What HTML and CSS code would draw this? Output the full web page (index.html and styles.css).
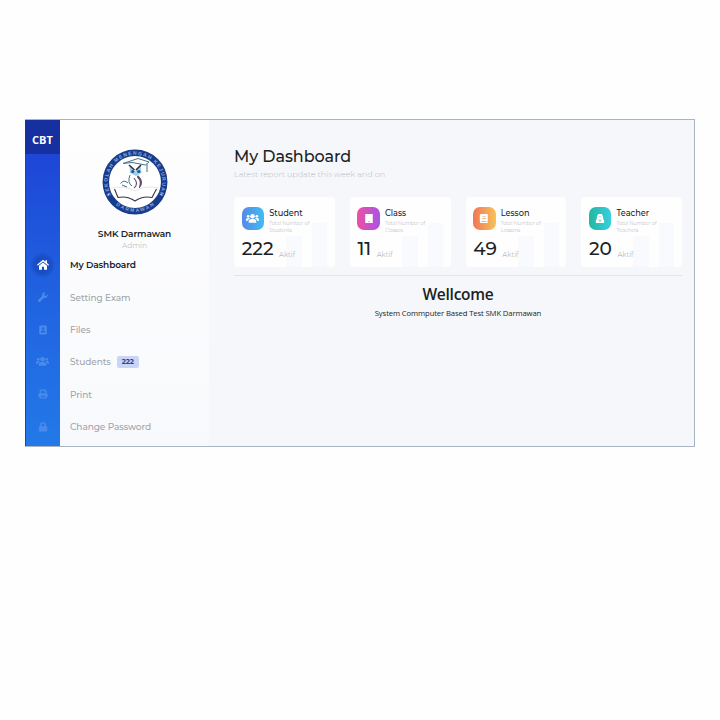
FILE: index.html
```html
<!DOCTYPE html>
<html lang="en">
<head>
<meta charset="utf-8">
<title>My Dashboard</title>
<link rel="stylesheet" href="styles.css">
</head>
<body>
<svg class="defs" width="0" height="0">
  <symbol id="users" viewBox="0 0 24 20"><circle cx="12" cy="6" r="4.2"/><circle cx="4" cy="6" r="2.5"/><circle cx="20" cy="6" r="2.5"/><path d="M5 18v-2q0-5 5-5h4q5 0 5 5v2zM0 14v-2q0-3 3-3h3q1 0 1.600.6Q4 11.500 3.700 14zM24 14v-2q0-3-3-3h-3q-1 0-1.600.6Q20 11.500 20.300 14z"/></symbol>
</svg>
<div class="app">
  <nav class="rail">
    <div class="brand">CBT</div>
    <div class="rail-list">
      <span class="rail-item active"><svg class="home" viewBox="0 0 24 21"><path d="M12 1 0 11l1.500 2L12 4.500 22.500 13l1.500-2-4-3.400V2h-3v3.200z"/><path d="M12 6.500 4 13v8h6v-6h4v6h6v-8z"/></svg></span>
      <span class="rail-item"><svg viewBox="0 0 24 24"><path d="M23.400 5.500 19.500 9.300 15.500 8.500 14.700 4.500 18.500.6A7 7 0 0 0 10 9.300L1 18.300a3.300 3.300 0 0 0 4.700 4.700l9-9A7 7 0 0 0 23.400 5.500z"/></svg></span>
      <span class="rail-item"><svg viewBox="0 0 24 24"><path fill-rule="evenodd" d="M5 1h14q2 0 2 2v18q0 2-2 2H5q-2 0-2-2V3q0-2 2-2zm7 4.500a3 3 0 1 0 0 6 3 3 0 0 0 0-6zM7 18h10v-1.500q0-3.500-3-3.500h-4q-3 0-3 3.500z"/></svg></span>
      <span class="rail-item"><svg class="wide"><use href="#users"/></svg></span>
      <span class="rail-item"><svg viewBox="0 0 24 24"><path fill-rule="evenodd" d="M4 10V2q0-1 1-1h12l3 3v6q3 0 3 3v6h-3v3q0 1-1 1H5q-1 0-1-1v-3H1v-6q0-3 3-3zm3-6v6h10V6h-3V4zm0 12v4h10v-4z"/></svg></span>
      <span class="rail-item"><svg viewBox="0 0 24 24"><path fill-rule="evenodd" d="M5 10V7a7 7 0 0 1 14 0v3h1q2 0 2 2v9q0 2-2 2H4q-2 0-2-2v-9q0-2 2-2zm3.500 0h7V7a3.500 3.500 0 0 0-7 0z"/></svg></span>
    </div>
  </nav>
  <aside class="side">
    <div class="profile">
      <svg class="crest" viewBox="0 0 66 66">
        <defs>
          <path id="arc-top" d="M9.500 47A27.300 27.300 0 1 1 56.500 47"/>
          <path id="arc-low" d="M12 54.500A30.500 30.500 0 0 0 54 54.500"/>
        </defs>
        <circle cx="33" cy="33" r="29.200" class="ring"/>
        <text class="ring-text"><textPath href="#arc-top" startOffset="1" textLength="112">SEKOLAH MENENGAH KEJURUAN</textPath></text>
        <text class="ring-text"><textPath href="#arc-low" startOffset="2.500" textLength="41">DARMAWAN</textPath></text>
        <circle cx="6.500" cy="45.500" r=".8" class="dot"/><circle cx="59.500" cy="45.500" r=".8" class="dot"/>
        <path class="pale" d="M9 39Q23 36 33 42 43 36 57 39"/>
        <path class="book" d="M12.500 40 16 48.500Q25 46.500 33 52 41 46.500 50 48.500L54.500 40"/>
        <path class="cap" d="M21 14.500 36 9.500 47 13 43.500 16 30 13.500 21 14.500M45 15v8"/>
        <path class="face" d="M27.500 17 33 22 38.500 16.500 39.500 24 34 27 28 24z"/>
        <path class="brow" d="M27 16 32.500 21M39 16 34 21"/>
        <circle cx="30.700" cy="22.500" r="1.600" class="eye"/><circle cx="36.800" cy="22.500" r="1.600" class="eye"/>
        <path class="cap" d="M28 26Q25 34 30 37M18.500 34.500Q22 30 26 34M20 36l5 2"/>
        <path class="wing" d="M36 27Q42 33 37.500 38.500 40 32 35.500 28zM32 29Q37 35 32 39"/>
      </svg>
      <div class="name">SMK Darmawan</div>
      <div class="role">Admin</div>
    </div>
    <div class="menu">
      <a class="current">My Dashboard</a>
      <a>Setting Exam</a>
      <a>Files</a>
      <a>Students<b class="badge">222</b></a>
      <a>Print</a>
      <a>Change Password</a>
    </div>
  </aside>
  <main class="main">
    <h1>My Dashboard</h1>
    <p class="lead">Latest report update this week and on</p>
    <section class="cards">
      <article class="card">
        <div class="head"><span class="tile blue"><svg class="wide"><use href="#users"/></svg></span><div><h2>Student</h2><p>Total Number of<br>Students</p></div></div>
        <div class="count"><strong>222</strong><span>Aktif</span></div>
      </article>
      <article class="card">
        <div class="head"><span class="tile pink"><svg viewBox="0 0 24 24"><path fill-rule="evenodd" d="M3 1h18v22H3zm8 17v3h2v-3z"/></svg></span><div><h2>Class</h2><p>Total Number of<br>Classes</p></div></div>
        <div class="count"><strong>11</strong><span>Aktif</span></div>
      </article>
      <article class="card">
        <div class="head"><span class="tile orange"><svg viewBox="0 0 24 24"><path fill-rule="evenodd" d="M5 1h16v17l-1 2 1 1v2H5q-3 0-3-3V4q0-3 3-3zm3 6v1.500h9V7zm0 4v1.500h9V11zM6 18v2h12v-2z"/></svg></span><div><h2>Lesson</h2><p>Total Number of<br>Lessons</p></div></div>
        <div class="count"><strong>49</strong><span>Aktif</span></div>
      </article>
      <article class="card">
        <div class="head"><span class="tile teal"><svg viewBox="0 0 24 24"><path fill-rule="evenodd" d="M8 1h8l3 5 1 8 2 3v6H2v-6l2-3 1-8zm1 13 1 6h1v-5zm6 0-2 1v5h1zM9 7v2h2V7zm4 0v2h2V7z"/></svg></span><div><h2>Teacher</h2><p>Total Number of<br>Teachers</p></div></div>
        <div class="count"><strong>20</strong><span>Aktif</span></div>
      </article>
    </section>
    <section class="welcome">
      <h3>Wellcome</h3>
      <p>System Commputer Based Test SMK Darmawan</p>
    </section>
  </main>
</div>
</body>
</html>
```
FILE: styles.css
```css
* { box-sizing: border-box; margin: 0; padding: 0; }
body { width: 720px; height: 720px; padding: 119px 0 0 25px; background: #fefefe; font-family: Montserrat, Inter, sans-serif; color: #1c1f26; overflow: hidden; }
svg { display: block; fill: currentColor; }
.defs { position: absolute; }
.app { display: flex; width: 670px; height: 328px; border: 1px solid #a9b3c3; background: #f5f7fb; }

.rail { width: 35px; margin-left: -1px; border-left: 1px solid #1c46a8; background: linear-gradient(#1d3fd4, #2060e0 50%, #2379e8); }
.brand { height: 34px; margin-left: -1px; text-align: center; color: #fff; background: #17309f; font: 700 11px/39px "Open Sans", sans-serif; }
.rail-list { padding-top: 94.600px; margin-left: -1px; }
.rail-item { display: flex; align-items: center; justify-content: center; height: 32.400px; color: #4b8aeb; }
.rail-item svg { width: 10px; height: 10px; }
.rail-item svg.wide { width: 13px; height: 11px; }
.rail-item svg.home { width: 12px; height: 11px; }
.rail-item.active { color: #fff; background: radial-gradient(circle, #194dc3 0 8px, transparent 13px); }

.side { width: 149px; background: linear-gradient(#fefeff, #fafbfd 65%, #f8f9fc); }
.profile { height: 128.600px; padding-top: 29px; text-align: center; }
.crest { width: 66px; height: 66px; margin: 0 auto; }
.ring { fill: #fff; stroke: #173c8c; stroke-width: 6.500; }
.ring-text { fill: #8fa9dc; font: 700 5px "Liberation Sans", sans-serif; }
.dot { fill: #b9cdf0; }
.crest path { fill: none; stroke-linejoin: round; }
.crest .pale { stroke: #d2d4dd; stroke-width: .6; }
.crest .book { stroke: #373447; stroke-width: 1.100; }
.crest .cap { stroke: #487086; stroke-width: 1; }
.crest .face { fill: #9bcfec; }
.crest .brow { stroke: #343141; stroke-width: 1.600; }
.crest .eye { fill: #27567c; }
.crest .wing { stroke: #5b4868; stroke-width: 1.100; }
.name { margin-top: 12px; font-size: 9px; line-height: 13px; font-weight: 600; letter-spacing: -.1px; }
.role { font-size: 7.500px; line-height: 11px; color: #c2c4c8; letter-spacing: -.1px; }
.menu a { display: flex; align-items: center; height: 32.400px; padding-left: 10px; font-size: 9px; font-weight: 500; letter-spacing: -.08px; color: #a3a5a9; }
.menu a.current { color: #20232a; font-weight: 600; letter-spacing: -.12px; }
.badge { width: 22px; height: 12px; margin-left: 6px; border-radius: 2px; background: #c9d5f6; color: #28439b; font-size: 7px; line-height: 12px; font-weight: 700; text-align: center; }

.main { flex: 1; padding: 26px 12px 0 25px; }
h1 { font-size: 16px; line-height: 21px; font-weight: 500; letter-spacing: -.08px; }
.lead { font-size: 8px; line-height: 14px; color: #b8bbc1; font-weight: 300; }
.cards { display: grid; grid-template-columns: repeat(4, 1fr); gap: 15px; margin-top: 16px; padding-bottom: 8px; border-bottom: 1px solid #e2e5eb; }
.card { height: 70px; padding: 10px 0 0 7.700px; border-radius: 4px; background: linear-gradient(#f9fafd, #f9fafd) 52px 100% / 16px 31px no-repeat, linear-gradient(#f9fafd, #f9fafd) 78px 100% / 15px 44px no-repeat, #fefefe; }
.head { display: flex; gap: 5px; height: 29px; }
.tile { display: flex; align-items: center; justify-content: center; width: 22.500px; height: 23px; border-radius: 7px; color: #fff; }
.tile svg { width: 10px; height: 11px; }
.tile svg.wide { width: 13px; height: 11px; }
.blue { background: linear-gradient(90deg, #5689e9, #41bdf2); }
.pink { background: linear-gradient(90deg, #ed4fa2, #a855e5); }
.orange { background: linear-gradient(90deg, #f37557, #f5c35b); }
.teal { background: linear-gradient(90deg, #25b6a0, #38cfe0); }
h2 { font-size: 8.200px; line-height: 12px; font-weight: 500; }
.head p { margin-top: 1px; font-size: 5px; line-height: 7px; font-weight: 300; color: #a9abb1; white-space: nowrap; }
.count { display: flex; align-items: baseline; gap: 5.500px; line-height: 26px; }
.count strong { font-size: 18.500px; font-weight: 500; }
.count span { font-size: 7px; line-height: 10px; font-weight: 300; color: #a0a3aa; position: relative; top: 2px; }
.welcome { text-align: center; font-family: "Open Sans", "Noto Sans", sans-serif; }
h3 { margin-top: 8px; font-size: 15.500px; line-height: 21px; font-weight: 600; letter-spacing: -.25px; }
.welcome p { margin-top: 2px; font-size: 7.700px; line-height: 12px; letter-spacing: -.12px; }
```
